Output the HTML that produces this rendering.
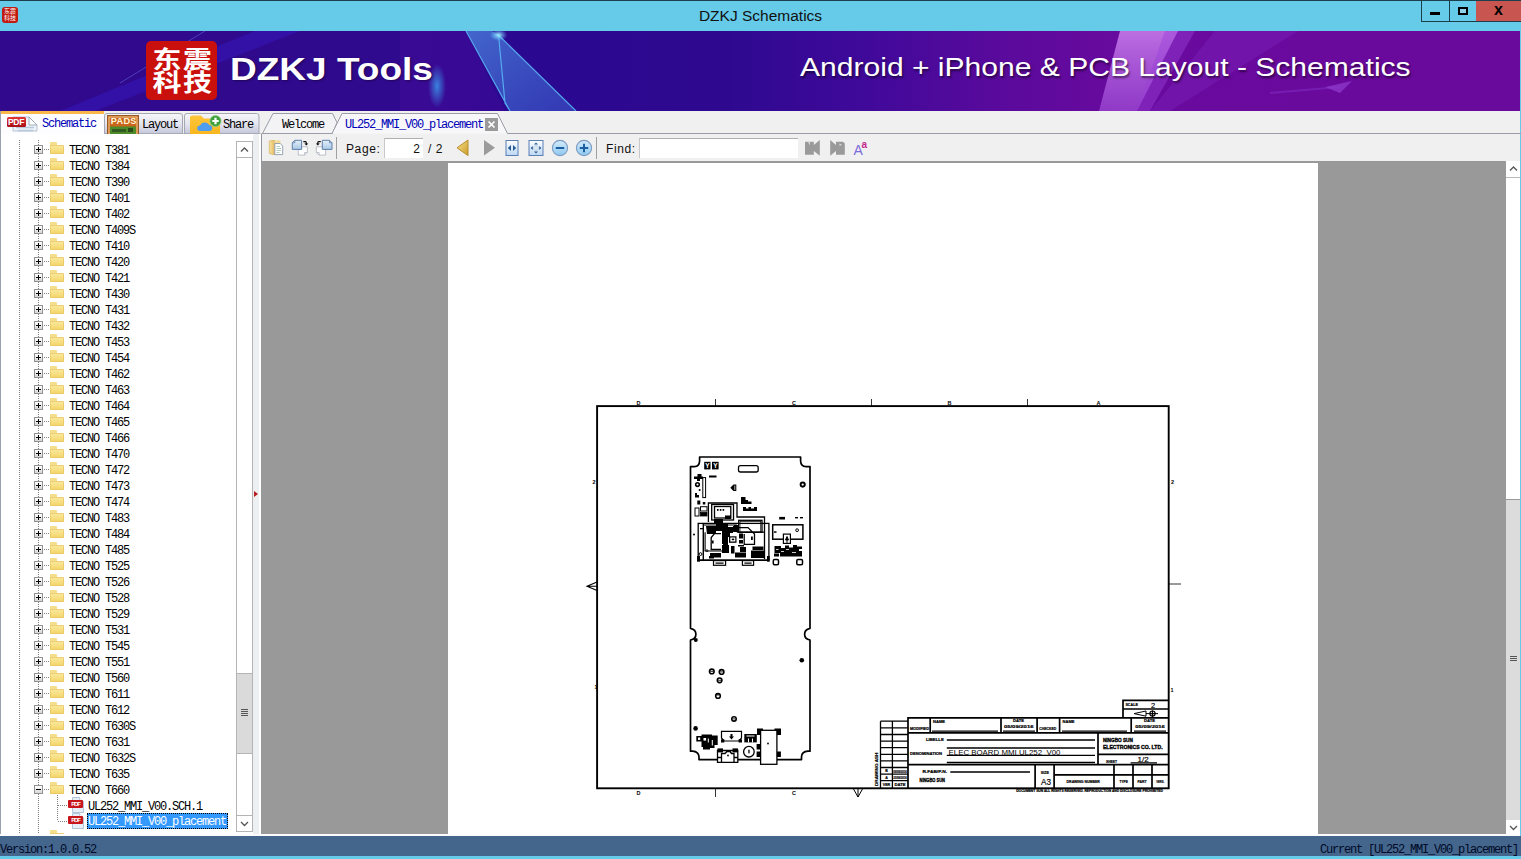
<!DOCTYPE html>
<html lang="en"><head><meta charset="utf-8"><title>DZKJ Schematics</title>
<style>
*{box-sizing:border-box;margin:0;padding:0}
html,body{width:1521px;height:859px;overflow:hidden;background:#6bc8e9}
body{font-family:"Liberation Sans",sans-serif;position:relative}
i{font-style:normal;display:block}
#win{position:absolute;left:0;top:0;width:1521px;height:859px;background:#6bc8e9;overflow:hidden}
#titlebar{position:absolute;left:0;top:0;width:1521px;height:31px;background:#6bc8e9;border-top:1px solid #1c3f4e}
#appicon{position:absolute;left:2px;top:6px;width:16px;height:16px;background:#c21a10;border-radius:3px;color:#fff;font:6px/7px "Liberation Sans","Noto Sans CJK SC",sans-serif;text-align:center;padding-top:1px;overflow:hidden}
#appicon span{display:block;letter-spacing:0}
#title{position:absolute;left:0;top:0;width:1521px;height:30px;text-align:center;font-size:15.5px;line-height:29px;color:#111}
#ctl{position:absolute;left:1421px;top:0;width:100px;height:21px;display:flex}
.cb{height:21px;border-left:1px solid #1d3c4a;border-bottom:1px solid #1d3c4a;position:relative}
.cb.min{width:28px}.cb.max{width:27px}.cb.cls{width:45px;background:#c7544f;color:#000;font:bold 15px/16px "Liberation Sans",sans-serif;text-align:center;border-bottom:none;border-left:none}
.cb.min i{position:absolute;left:8px;top:11px;width:10px;height:3px;background:#000}
.cb.max i{position:absolute;left:8px;top:6px;width:10px;height:9px;border:2px solid #000;background:#8fd2ea}
#banner{position:absolute;left:0;top:31px;width:1519px;height:80px;background:linear-gradient(90deg,#30098c 0%,#30098c 25%,#3a0a90 45%,#5a0c98 65%,#6a0a9c 80%,#6a0a9c 100%);overflow:hidden}
#bannerfx{position:absolute;left:0;top:0}
#logo{position:absolute;left:146px;top:10px;width:72px;height:60px;background:#c4140f;border-radius:6px;color:#fff;font:bold 29px/27px "Liberation Sans","Noto Sans CJK SC",sans-serif;text-align:center;padding-top:4px}
#logo span{display:block;white-space:nowrap}
#brand{position:absolute;left:231px;top:17px;font:bold 35px/40px "Liberation Sans",sans-serif;color:#fff;white-space:nowrap;text-shadow:1px 1px 2px rgba(0,0,0,.4)}
#slogan{position:absolute;left:800px;top:19px;font:28px/34px "Liberation Sans",sans-serif;color:#fff;white-space:nowrap;text-shadow:1px 2px 2px rgba(0,0,0,.55)}
#tabrow{position:absolute;left:0;top:111px;width:1521px;height:25px;background:#f0f0f0}
#tree{position:absolute;left:0;top:134px;width:259px;height:702px;background:#fff;overflow:hidden;border-left:2px solid #a9aeb8}
#tree .row{position:absolute;left:-2px;width:236px;height:16px;font:12px/16px "Liberation Mono",monospace;letter-spacing:-1.2px;color:#000;white-space:nowrap}
.vline{position:absolute;width:1px;background:repeating-linear-gradient(180deg,#808080 0 1px,transparent 1px 2px);margin-left:-2px}
.bx{position:absolute;left:34px;top:4px;width:9px;height:9px;border:1px solid #919191;background:linear-gradient(#fff,#d8d8d8)}
.bx:before{content:"";position:absolute;left:1px;top:3px;width:5px;height:1px;background:#000}
.bx.p:after{content:"";position:absolute;left:3px;top:1px;width:1px;height:5px;background:#000}
.hd{position:absolute;left:44px;top:8px;width:5px;height:1px;background:repeating-linear-gradient(90deg,#808080 0 1px,transparent 1px 2px)}
.hd2{position:absolute;left:58px;top:8px;width:9px;height:1px;background:repeating-linear-gradient(90deg,#808080 0 1px,transparent 1px 2px)}
.fo{position:absolute;left:50px;top:1px;width:14px;height:12px;background:linear-gradient(#f7e39a,#f3d267);border-radius:1px;border:1px solid #ecc95c}
.fo:before{content:"";position:absolute;left:-1px;top:-2px;width:7px;height:3px;background:#f1d57a;border-radius:1px 1px 0 0}
.tx{position:absolute;left:70px;top:0}
.tx.sel{background:#3399ff;color:#fff;outline:1px dotted #000;outline-offset:-1px;padding:0 2px 0 1px;height:16px;top:0}
.pdf{position:absolute;left:67px;top:1px;width:15px;height:9px;background:#c8151b;border-radius:1px}
.pdf b{display:block;font:bold 6px/9px "Liberation Sans",sans-serif;color:#fff;letter-spacing:0;text-align:center}
.pdf:after{content:"";position:absolute;left:5px;top:9px;width:11px;height:5px;background:#dfe9f5;border:1px solid #b9c8dc;border-top:none}
#tsb{position:absolute;left:234px;top:7px;width:17px;height:691px;border:1px solid #b4b4b4;background:#fff}
.sbu,.sbd{position:absolute;left:0;width:15px;height:16px;background:#fff}
.sbu{top:0;border-bottom:1px solid #b4b4b4}.sbd{bottom:0;border-top:1px solid #b4b4b4}
.thumb{position:absolute;left:0;top:531px;width:15px;height:81px;background:#dadada;border-top:1px solid #b4b4b4;border-bottom:1px solid #b4b4b4;padding-top:35px}
.thumb i,.thumb2 i{width:7px;height:1px;background:#555;margin:0 auto 1px auto}
#split{position:absolute;left:253px;top:134px;width:8px;height:702px;background:#f4f5f8}
#split i{position:absolute;left:1px;top:357px;width:0;height:0;border-left:4px solid #e82020;border-top:3.5px solid transparent;border-bottom:3.5px solid transparent}
#toolbar{position:absolute;left:261px;top:134px;width:1260px;height:27px;background:#f0f0f0;border-top:1px solid #8e949e;border-left:1px solid #8e949e}
#view{position:absolute;left:261px;top:161px;width:1260px;height:675px;background:#999;overflow:hidden}
#paper{position:absolute;left:187px;top:1px;width:870px;height:674px;background:#fff}
#vsb{position:absolute;left:1243px;top:0;width:17px;height:674px;background:#dcdcdc;border-left:1px solid #c8c8c8}
#vsb .sbu{border:none;height:17px;width:16px}#vsb .sbd{border:none;height:17px;width:16px}
.thumb2{position:absolute;left:0;top:17px;width:16px;height:315px;background:#fff;padding-top:475px}
#status{position:absolute;left:0;top:837px;width:1521px;height:19px;background:#43638c;color:#fff;font:12px/22px "Liberation Mono",monospace;letter-spacing:-1.2px}
#status .sl{position:absolute;left:0;top:0}
#status .sr{position:absolute;right:3px;top:0}
#toolbar{left:0;top:0;width:1521px;height:0;border:none;background:none;overflow:visible}
.tbg{position:absolute;left:261px;top:133px;width:1260px;height:28px;background:#f0f0f0;border-top:1px solid #8e949e;border-left:1px solid #8e949e;border-bottom:1px solid #a2a2a2}
.ic{position:absolute;display:block}
.sep{position:absolute;top:137px;width:1px;height:22px;background:#a0a0a0}
.lbl{position:absolute;top:140px;font:12.5px/16px "Liberation Sans",sans-serif;color:#111;white-space:nowrap}
.inp{position:absolute;top:138px;height:20px;background:#fff;border-top:1px solid #b0b0b0;border-left:1px solid #c8c8c8;text-align:right;font:12.5px/18px "Liberation Sans",sans-serif;color:#111}
.inp span{padding-right:4px}
.aa{position:absolute;font:14px/16px "Liberation Sans",sans-serif;color:#8a6fe0}
.aa2{position:absolute;font:11px/12px "Liberation Sans",sans-serif;color:#d02a8a}
#tabrow{left:0;top:0;width:1521px;height:0;overflow:visible;background:none}
.tabbg{position:absolute;left:0;top:111px;width:1521px;height:23px;background:#f0f0f0}
.tabsvg{position:absolute;left:0;top:111px;display:block}
.tt{position:absolute;font:11.5px/16px "Liberation Mono",monospace;letter-spacing:-.9px;color:#000;white-space:nowrap}
.tt.blue{color:#0000b8}
.pdft{position:absolute;font:bold 8.5px/10px "Liberation Sans",sans-serif;color:#fff;letter-spacing:-.3px}
.padst{position:absolute;font:bold 11.5px/12px "Liberation Sans",sans-serif;color:#fdf0b8;letter-spacing:-.4px}
#tree .row{font-size:11.5px;letter-spacing:-.9px}
#status{font-size:11.5px;letter-spacing:-.9px}
#logo{left:146px;top:10px;width:71px;height:59px;font:bold 27px/23px "Liberation Sans","Noto Sans CJK SC",sans-serif;padding-top:6px;background:#c9100c;border-radius:5px}
#logo span{transform:scaleY(.88);letter-spacing:1px}
#brand{left:232px;top:18px;font:bold 31px/40px "Liberation Sans",sans-serif;transform:scaleX(1.165);transform-origin:0 0}
#slogan{left:801px;top:19px;font:26px/34px "Liberation Sans",sans-serif;transform:scaleX(1.15);transform-origin:0 0}
#banner{width:1520px;height:80px}
.tabbg{width:1520px}
.tbg{width:1259px}
#view{width:1259px}
#vsb{left:1244px;width:15px;border-left:none;background:#dcdcdc}
#vsb .sbu,#vsb .sbd{width:15px;height:16px}
.thumb2{left:0;top:16px;width:15px;height:320px}
#tree{border-left:1px solid #9aa3ad}
#tree .row{left:-1px}
.vline{margin-left:-1px}
.tx{left:69px}
#status{top:836px;height:20px;background:#46648c;color:#000a28}
#status .sl,#status .sr{top:1px}
#tree .row{font-size:12px;letter-spacing:-1.2px}
.tt{font-size:12px;letter-spacing:-1.2px}
#status{font-size:12px;letter-spacing:-1.2px}
#status .sl,#status .sr{top:3px}
#tree .row{font-size:11.6px;letter-spacing:-.96px}
.tx{top:2px}
.tx.sel{top:0;line-height:20px}
.fo{left:50px;top:4px;width:14px;height:9px;background:linear-gradient(#faeaa0,#f2d568);border:none;border-radius:0 1px 1px 1px;box-shadow:inset 0 0 0 1px rgba(226,190,90,.6)}
.fo:before{left:0;top:-2px;width:7px;height:2px;background:#f5de8c;border-radius:1px 1px 0 0}
#tree .row{font-size:12px;letter-spacing:-1.2px}
.tx{top:1.5px}
.tx.sel{top:0;line-height:19px}
#brand{left:229.5px;top:19px;transform:scaleX(1.194)}
#slogan{left:800px;top:19px;transform:scaleX(1.156)}
.lbl{font-size:12px;letter-spacing:.9px;top:140.5px}
.inp{font-size:12px}
.lbl{letter-spacing:.6px}
.inp{line-height:20px}
.inp span{padding-right:3px}
.aa{font:14px/14px "Liberation Sans",sans-serif;color:#7d6ddc}
.aa2{font:bold 10px/10px "Liberation Sans",sans-serif;color:#c4288e}
.tbg{border-bottom:none;height:28px}
#view{height:673px}
#paper{left:187px;top:2px;width:870px;height:671px}
#vsb{height:673px}
#strip{position:absolute;left:0;top:834px;width:1520px;height:3px;background:#fbfcfe}
.aa2{margin-top:1.5px}
#vsb{left:1244.500px;width:14.500px;background:#fff}
#vsb .sbu{height:17px;border-bottom:1px solid #b8b8b8;width:15px}
#vsb .sbd{height:18px;border-top:1px solid #b8b8b8;width:15px}
.thumb2{top:338px;height:317px;background:#dcdcdc;border-top:1px solid #9a9a9a;padding-top:154px}
#logo{padding:0;text-align:left}
#logo span{position:absolute;left:6px;letter-spacing:3.4px;font-size:27px;line-height:27px;transform:scaleY(.88);transform-origin:0 0}
#logo .l1{top:6px}#logo .l2{top:29px}
#logo span{left:5.5px;letter-spacing:1.6px;font-size:29px;line-height:29px;transform:scaleY(.82)}
#logo .l1{top:7.5px}#logo .l2{top:30.5px}
#logo span{left:6.5px}
#logo .l1{top:7px}#logo .l2{top:30px}
#banner{background:linear-gradient(90deg,#30098c 0%,#300a8e 28%,#2a0890 34%,#2e0990 48%,#40099a 57%,#5a0a9c 66%,#690a9e 74%,#6a0a9c 100%)}
#split i{border-left-color:#b41a1a}
.padst{font-size:10.5px;top:116px !important;left:110px !important;letter-spacing:-.2px}
#tsb{left:235px}
.pdf{top:3px;left:68px;height:8px}
.pdf b{line-height:8px}
.pdf:after{top:-4px;left:5px;width:11px;height:15px;border:1px solid #b9c8dc;background:linear-gradient(#f4f8fd,#d5e2f2);z-index:-1}
.pdf{z-index:1}
.pdfi{position:absolute;left:67px;top:0;display:block}
html,body,#win,#titlebar{background-color:#66cae9}
#status{background:#44668c}
.tbg{top:134px;height:27px;border-top:none}
.padst{font-size:9.8px;top:116.5px !important;left:110.5px !important;letter-spacing:-.1px;color:#fff6d8}
.padst{font-size:9.2px;top:114.8px !important;left:110.8px !important;letter-spacing:.25px}
.cb.max i{height:8px}
.cb.cls{font:bold 16px/18px "Liberation Sans",sans-serif;border-bottom:1px solid #1d3c4a;background:#c8554f}
.thumb2{height:321px;padding-top:156px}
#vsb .sbd{height:14px;border-top:none}
#vsb .sbd svg{margin-top:-.5px}
.fo:before{top:-3px;height:3px}
#split{background:linear-gradient(90deg,#eeeff1 0,#eeeff1 6px,#fff 6px)}

</style></head>
<body>
<div id="win">
<div id="titlebar"><div id="appicon"><span>东震</span><span>科技</span></div><div id="title">DZKJ Schematics</div>
<div id="ctl"><div class="cb min"><i></i></div><div class="cb max"><i></i></div><div class="cb cls">x</div></div></div>
<div id="banner">
<svg id="bannerfx" width="1520" height="80" viewBox="0 0 1520 80"><defs>
<linearGradient id="bcry" x1="0" x2="1" y1="0" y2="1"><stop offset="0" stop-color="#4a86e0" stop-opacity=".75"/><stop offset="1" stop-color="#3a5fd0" stop-opacity=".55"/></linearGradient>
<radialGradient id="bglow"><stop offset="0" stop-color="#3aa0f0" stop-opacity=".8"/><stop offset="1" stop-color="#3aa0f0" stop-opacity="0"/></radialGradient>
<radialGradient id="bspark"><stop offset="0" stop-color="#9ff0ff" stop-opacity="1"/><stop offset="1" stop-color="#60c0ff" stop-opacity="0"/></radialGradient>
<linearGradient id="bpk" x1="0" x2="0" y1="0" y2="1"><stop offset="0" stop-color="#d890f8" stop-opacity=".75"/><stop offset="1" stop-color="#b060e8" stop-opacity=".55"/></linearGradient>
</defs>
<path d="M255 0 H300 L95 80 H60 Z" fill="#3a20d8" opacity=".35"/>
<path d="M205 0 L120 52" stroke="#6a70f0" stroke-width="1" opacity=".5"/>
<path d="M400 0 H466 L505 80 H400Z" fill="#4a0ca0" opacity=".35"/>
<path d="M466 0 H492 L498.500 4 L576 80 H510Z" fill="url(#bcry)"/>
<path d="M466 0 L510 80 M498.500 4 L505 72 L510 80 M498.500 4 L576 80" stroke="#58b4f4" stroke-width="1.200" fill="none" opacity=".9"/>
<ellipse cx="498.500" cy="4" rx="9" ry="6" fill="url(#bspark)"/>
<ellipse cx="437" cy="55" rx="9" ry="22" fill="url(#bglow)"/>
<path d="M1120 0 H1178 L1137 80 H1099Z" fill="url(#bpk)"/>
<path d="M1165 0 H1195 L1150 80 H1137Z" fill="#9a40d8" opacity=".45"/>
<path d="M1215 0 H1298 L1170 80 H1150Z" fill="#8a30c8" opacity=".28"/>
<path d="M1325 56 L1352 50 L1340 62Z" fill="#a050e0" opacity=".5"/>
<path d="M1270 62 L1340 56" stroke="#8a3ad0" stroke-width="2" opacity=".4"/>
</svg>
<div id="logo"><span class="l1">东震</span><span class="l2">科技</span></div>
<div id="brand">DZKJ Tools</div>
<div id="slogan">Android + iPhone &amp; PCB Layout - Schematics</div>
</div>
<div id="tabrow"><div class="tabbg"></div>
<svg class="tabsvg" width="1521" height="25" viewBox="0 111 1521 25">
<defs>
<linearGradient id="gtab" x1="0" x2="0" y1="0" y2="1"><stop offset="0" stop-color="#f6f6f9"/><stop offset=".5" stop-color="#e4e5ee"/><stop offset="1" stop-color="#c3c6da"/></linearGradient>
<linearGradient id="gpdf" x1="0" x2="0" y1="0" y2="1"><stop offset="0" stop-color="#e0363a"/><stop offset="1" stop-color="#a80c14"/></linearGradient>
<linearGradient id="gfold" x1="0" x2="0" y1="0" y2="1"><stop offset="0" stop-color="#fdc63a"/><stop offset="1" stop-color="#f9b61e"/></linearGradient>
</defs>
<!-- active left tab -->
<rect x="0" y="111" width="104" height="25" fill="#fdfdff"/>
<rect x="0" y="111" width="104" height="3" fill="#fbb84a"/>
<rect x="0" y="111" width="1" height="25" fill="#9aa3ad"/>
<!-- layout tab -->
<path d="M104.5 134 V116 Q104.5 113.5 107 113.5 H180 Q182.5 113.5 182.5 116 V134Z" fill="url(#gtab)" stroke="#a5a8b4" stroke-width="1"/>
<!-- share tab -->
<path d="M184.5 134 V116 Q184.5 113.5 187 113.5 H256.500 Q259 113.500 259 116 V134Z" fill="url(#gtab)" stroke="#a5a8b4" stroke-width="1"/>
<rect x="104" y="133.500" width="157" height="1" fill="#9a9da8"/>
<!-- doc tabs -->
<path d="M262.500 133.500 L273 113.500 H332.500 L337 122.500 L332.500 133.500Z" fill="#f3f3f5" stroke="#9a9da8" stroke-width="1"/>
<path d="M332 133.500 L342 113.500 H497.500 L507.500 133.500" fill="#f7f7f9" stroke="#9a9da8" stroke-width="1"/>
<path d="M507.500 133.500 H1521" stroke="#9a9da8" stroke-width="1"/>
<path d="M261.500 133.500 H332.5" stroke="#9a9da8" stroke-width="1"/>
<!-- PDF icon -->
<path d="M13 117 H29 L37 125 V131 H13Z" fill="#eef3fa" stroke="#b5c3d6" stroke-width="1"/>
<path d="M29 117 L37 125 H29Z" fill="#fff" stroke="#8d99aa" stroke-width=".8"/>
<path d="M16 127.500H34M18 130.500H33" stroke="#b8c8dc" stroke-width="1.600"/>
<rect x="7" y="117" width="19" height="10" rx="1.500" fill="url(#gpdf)"/>
<!-- PADS icon -->
<rect x="107.500" y="115.500" width="31" height="18.500" fill="#c9651c" stroke="#9a5a28" stroke-width="1"/>
<rect x="109" y="117" width="28" height="17" fill="none" stroke="#f3d9a0" stroke-width=".9"/>
<rect x="110" y="126.500" width="26" height="7.500" fill="#4c8a2a"/>
<rect x="112" y="129" width="14" height="3" fill="#335a20"/><rect x="128" y="128" width="5" height="4" fill="#2a4a1c"/>
<!-- share icon -->
<path d="M190 117.500 Q190 115.500 192 115.500 H201 L204 118.500 H218 Q220 118.500 220 120.500 V134 H190Z" fill="url(#gfold)"/>
<path transform="translate(1.200 -2)" d="M199 133 Q196 133 196 130 Q196 127.500 199 127.500 Q200 124.500 203.500 124.500 Q207 124.500 208 127 Q211 127 211 130 Q211 133 208 133Z" fill="#4f9df0"/>
<circle cx="215.500" cy="121" r="5.600" fill="#3fa03c" stroke="#8fce86" stroke-width=".8"/>
<path d="M212.300 121H218.700M215.500 117.800V124.200" stroke="#fff" stroke-width="2.200"/>
<!-- close box -->
<rect x="485" y="118" width="13" height="13" fill="#9a9a9a"/>
<path d="M488.500 121.500 L494.500 127.500 M494.500 121.500 L488.500 127.500" stroke="#fff" stroke-width="1.700"/>
</svg>
<span class="pdft" style="left:8px;top:117px">PDF</span>
<span class="padst" style="left:109px;top:115px">PADS</span>
<span class="tt blue" style="left:42px;top:116px">Schematic</span>
<span class="tt" style="left:142px;top:117px">Layout</span>
<span class="tt" style="left:223px;top:117px">Share</span>
<span class="tt" style="left:282px;top:117px">Welcome</span>
<span class="tt blue" style="left:345px;top:117px">UL252_MMI_V00_placement</span>

</div>
<div id="tree">
<div class="vline" style="left:19px;top:6px;height:694px"></div>
<div class="vline" style="left:38px;top:6px;height:694px"></div>
<div class="row" style="top:7px"><i class="bx p"></i><i class="hd"></i><i class="fo"></i><span class="tx">TECNO T381</span></div>
<div class="row" style="top:23px"><i class="bx p"></i><i class="hd"></i><i class="fo"></i><span class="tx">TECNO T384</span></div>
<div class="row" style="top:39px"><i class="bx p"></i><i class="hd"></i><i class="fo"></i><span class="tx">TECNO T390</span></div>
<div class="row" style="top:55px"><i class="bx p"></i><i class="hd"></i><i class="fo"></i><span class="tx">TECNO T401</span></div>
<div class="row" style="top:71px"><i class="bx p"></i><i class="hd"></i><i class="fo"></i><span class="tx">TECNO T402</span></div>
<div class="row" style="top:87px"><i class="bx p"></i><i class="hd"></i><i class="fo"></i><span class="tx">TECNO T409S</span></div>
<div class="row" style="top:103px"><i class="bx p"></i><i class="hd"></i><i class="fo"></i><span class="tx">TECNO T410</span></div>
<div class="row" style="top:119px"><i class="bx p"></i><i class="hd"></i><i class="fo"></i><span class="tx">TECNO T420</span></div>
<div class="row" style="top:135px"><i class="bx p"></i><i class="hd"></i><i class="fo"></i><span class="tx">TECNO T421</span></div>
<div class="row" style="top:151px"><i class="bx p"></i><i class="hd"></i><i class="fo"></i><span class="tx">TECNO T430</span></div>
<div class="row" style="top:167px"><i class="bx p"></i><i class="hd"></i><i class="fo"></i><span class="tx">TECNO T431</span></div>
<div class="row" style="top:183px"><i class="bx p"></i><i class="hd"></i><i class="fo"></i><span class="tx">TECNO T432</span></div>
<div class="row" style="top:199px"><i class="bx p"></i><i class="hd"></i><i class="fo"></i><span class="tx">TECNO T453</span></div>
<div class="row" style="top:215px"><i class="bx p"></i><i class="hd"></i><i class="fo"></i><span class="tx">TECNO T454</span></div>
<div class="row" style="top:231px"><i class="bx p"></i><i class="hd"></i><i class="fo"></i><span class="tx">TECNO T462</span></div>
<div class="row" style="top:247px"><i class="bx p"></i><i class="hd"></i><i class="fo"></i><span class="tx">TECNO T463</span></div>
<div class="row" style="top:263px"><i class="bx p"></i><i class="hd"></i><i class="fo"></i><span class="tx">TECNO T464</span></div>
<div class="row" style="top:279px"><i class="bx p"></i><i class="hd"></i><i class="fo"></i><span class="tx">TECNO T465</span></div>
<div class="row" style="top:295px"><i class="bx p"></i><i class="hd"></i><i class="fo"></i><span class="tx">TECNO T466</span></div>
<div class="row" style="top:311px"><i class="bx p"></i><i class="hd"></i><i class="fo"></i><span class="tx">TECNO T470</span></div>
<div class="row" style="top:327px"><i class="bx p"></i><i class="hd"></i><i class="fo"></i><span class="tx">TECNO T472</span></div>
<div class="row" style="top:343px"><i class="bx p"></i><i class="hd"></i><i class="fo"></i><span class="tx">TECNO T473</span></div>
<div class="row" style="top:359px"><i class="bx p"></i><i class="hd"></i><i class="fo"></i><span class="tx">TECNO T474</span></div>
<div class="row" style="top:375px"><i class="bx p"></i><i class="hd"></i><i class="fo"></i><span class="tx">TECNO T483</span></div>
<div class="row" style="top:391px"><i class="bx p"></i><i class="hd"></i><i class="fo"></i><span class="tx">TECNO T484</span></div>
<div class="row" style="top:407px"><i class="bx p"></i><i class="hd"></i><i class="fo"></i><span class="tx">TECNO T485</span></div>
<div class="row" style="top:423px"><i class="bx p"></i><i class="hd"></i><i class="fo"></i><span class="tx">TECNO T525</span></div>
<div class="row" style="top:439px"><i class="bx p"></i><i class="hd"></i><i class="fo"></i><span class="tx">TECNO T526</span></div>
<div class="row" style="top:455px"><i class="bx p"></i><i class="hd"></i><i class="fo"></i><span class="tx">TECNO T528</span></div>
<div class="row" style="top:471px"><i class="bx p"></i><i class="hd"></i><i class="fo"></i><span class="tx">TECNO T529</span></div>
<div class="row" style="top:487px"><i class="bx p"></i><i class="hd"></i><i class="fo"></i><span class="tx">TECNO T531</span></div>
<div class="row" style="top:503px"><i class="bx p"></i><i class="hd"></i><i class="fo"></i><span class="tx">TECNO T545</span></div>
<div class="row" style="top:519px"><i class="bx p"></i><i class="hd"></i><i class="fo"></i><span class="tx">TECNO T551</span></div>
<div class="row" style="top:535px"><i class="bx p"></i><i class="hd"></i><i class="fo"></i><span class="tx">TECNO T560</span></div>
<div class="row" style="top:551px"><i class="bx p"></i><i class="hd"></i><i class="fo"></i><span class="tx">TECNO T611</span></div>
<div class="row" style="top:567px"><i class="bx p"></i><i class="hd"></i><i class="fo"></i><span class="tx">TECNO T612</span></div>
<div class="row" style="top:583px"><i class="bx p"></i><i class="hd"></i><i class="fo"></i><span class="tx">TECNO T630S</span></div>
<div class="row" style="top:599px"><i class="bx p"></i><i class="hd"></i><i class="fo"></i><span class="tx">TECNO T631</span></div>
<div class="row" style="top:615px"><i class="bx p"></i><i class="hd"></i><i class="fo"></i><span class="tx">TECNO T632S</span></div>
<div class="row" style="top:631px"><i class="bx p"></i><i class="hd"></i><i class="fo"></i><span class="tx">TECNO T635</span></div>
<div class="row" style="top:647px"><i class="bx m"></i><i class="hd"></i><i class="fo"></i><span class="tx">TECNO T660</span></div>
<div class="vline" style="left:57px;top:661px;height:26px"></div>
<div class="row" style="top:663px"><i class="hd2"></i><svg class="pdfi" width="18" height="16" viewBox="0 0 18 16"><path d="M5.500 .5H12.500L16.500 4.500V15.500H5.500Z" fill="#e6eef8" stroke="#b4c4d8" stroke-width="1"/><path d="M12.500 .5V4.500H16.500" fill="#fff" stroke="#b4c4d8" stroke-width=".8"/><rect x="1" y="3" width="15" height="8" rx="1" fill="#c8151b"/><text x="8.500" y="9.300" font-family="Liberation Sans,sans-serif" font-size="6" font-weight="bold" fill="#fff" text-anchor="middle">PDF</text></svg><span class="tx" style="left:88px">UL252_MMI_V00.SCH.1</span></div>
<div class="row" style="top:679px"><i class="hd2"></i><svg class="pdfi" width="18" height="16" viewBox="0 0 18 16"><path d="M5.500 .5H12.500L16.500 4.500V15.500H5.500Z" fill="#e6eef8" stroke="#b4c4d8" stroke-width="1"/><path d="M12.500 .5V4.500H16.500" fill="#fff" stroke="#b4c4d8" stroke-width=".8"/><rect x="1" y="3" width="15" height="8" rx="1" fill="#c8151b"/><text x="8.500" y="9.300" font-family="Liberation Sans,sans-serif" font-size="6" font-weight="bold" fill="#fff" text-anchor="middle">PDF</text></svg><span class="tx sel" style="left:87px">UL252_MMI_V00_placement</span></div>
<div class="row" style="top:695px"><i class="fo"></i></div>
<div id="tsb"><div class="sbu"><svg width="15" height="15" viewBox="0 0 15 15"><path d="M4 9.5 L7.5 6 L11 9.5" fill="none" stroke="#555" stroke-width="1.3"/></svg></div><div class="thumb"><i></i><i></i><i></i><i></i></div><div class="sbd"><svg width="15" height="15" viewBox="0 0 15 15"><path d="M4 6 L7.5 9.5 L11 6" fill="none" stroke="#555" stroke-width="1.3"/></svg></div></div>
</div>
<div id="split"><i></i></div>
<div id="toolbar">
<div class="tbg"></div>
<svg class="ic" style="left:267px;top:138px" width="68" height="20" viewBox="267 138 68 20"><defs><linearGradient id="gfo" x1="0" x2="1"><stop offset="0" stop-color="#f9e6a4"/><stop offset="1" stop-color="#e2b95c"/></linearGradient><linearGradient id="gbp" x1="0" x2="0" y1="0" y2="1"><stop offset="0" stop-color="#e4f0fb"/><stop offset="1" stop-color="#a9c8e6"/></linearGradient></defs>
<path d="M269.300 141L274.500 140.300V154.800L269.300 153.500Z" fill="url(#gfo)" stroke="#cfa54c" stroke-width=".6"/><path d="M274.500 140.300H280.500V143.500H274.500Z" fill="#f2dc98"/>
<path d="M274.800 143.500H280.300L282.700 146V154.600H274.800Z" fill="#fdfefe" stroke="#8f9bab" stroke-width=".9"/><path d="M276.500 146.500H280M276.500 148.500H281M276.500 150.500H281M276.500 152.500H279.500" stroke="#9fc2a8" stroke-width=".8"/>
<path d="M298.300 146.800H307.400V152.500L304.500 155.100H298.300Z" fill="#fff" stroke="#b4b9c2" stroke-width=".9"/><path d="M304.500 155V152.500H307.300" fill="none" stroke="#b4b9c2" stroke-width=".8"/>
<path d="M292.300 142.800L294.800 140.300H301.600V149.400H292.300Z" fill="url(#gbp)" stroke="#5e7fa8" stroke-width="1"/><path d="M292.500 142.800H294.800V140.500" fill="none" stroke="#5e7fa8" stroke-width=".8"/>
<path d="M303.300 141.600H305.500Q306.300 141.600 306.300 143V144" fill="none" stroke="#111" stroke-width="1.300"/><path d="M304.300 143.600H308.300L306.300 145.600Z" fill="#111"/>
<path d="M316.300 146.800H325.600V155.100H319.200L316.300 152.500Z" fill="#fff" stroke="#b4b9c2" stroke-width=".9"/><path d="M319.200 155V152.500H316.400" fill="none" stroke="#b4b9c2" stroke-width=".8"/>
<path d="M322.300 140.300H329.500L332 142.800V149.400H322.300Z" fill="url(#gbp)" stroke="#5e7fa8" stroke-width="1"/><path d="M329.500 140.500V142.800H331.800" fill="none" stroke="#5e7fa8" stroke-width=".8"/>
<path d="M320.800 141.600H318.600Q317.800 141.600 317.800 143V144" fill="none" stroke="#111" stroke-width="1.300"/><path d="M315.800 143.600H319.800L317.800 145.600Z" fill="#111"/>
</svg>
<i class="sep" style="left:336px"></i>
<span class="lbl" style="left:346px">Page:</span>
<div class="inp" style="left:384px;width:39px"><span>2</span></div>
<span class="lbl" style="left:428px">/ 2</span>
<svg class="ic" style="left:456px;top:139px" width="13" height="18" viewBox="0 0 13 18"><defs><linearGradient id="gpa" x1="0" x2="1" y1="0" y2="1"><stop offset="0" stop-color="#fbe48a"/><stop offset="1" stop-color="#c99a2c"/></linearGradient></defs><path d="M1 8.8 L12 1 V16.6 Z" fill="url(#gpa)" stroke="#b98f2a" stroke-width="1"/></svg>
<svg class="ic" style="left:483px;top:139px" width="13" height="18" viewBox="0 0 13 18"><path d="M1 1 L12 8.8 L1 16.6 Z" fill="#9b9b9b"/></svg>
<svg class="ic" style="left:505px;top:139px" width="14" height="18" viewBox="0 0 14 18"><defs><linearGradient id="gfw" x1="0" x2="0" y1="0" y2="1"><stop offset="0" stop-color="#fdfeff"/><stop offset="1" stop-color="#bcd8f4"/></linearGradient></defs><rect x="1" y="1.5" width="12" height="15" fill="url(#gfw)" stroke="#5b7fb4" stroke-width="1"/><path d="M2.8 9 L6 6 V12Z M11.2 9 L8 6 V12Z" fill="#2b5c93"/></svg>
<svg class="ic" style="left:528px;top:139px" width="16" height="18" viewBox="0 0 16 18"><rect x="1" y="1.5" width="14" height="15" fill="url(#gfw)" stroke="#5b7fb4" stroke-width="1"/><circle cx="8" cy="9" r="2.4" fill="#dce8f4" stroke="#b3c4d8" stroke-width=".6"/><path d="M2.6 9 L4.8 7 V11Z M13.4 9 L11.2 7 V11Z M8 3.6 L10 5.6 H6Z M8 14.4 L10 12.4 H6Z" fill="#2b5c93"/></svg>
<svg class="ic" style="left:551px;top:139px" width="18" height="18" viewBox="0 0 18 18"><defs><linearGradient id="gzm" x1="0" x2="0" y1="0" y2="1"><stop offset="0" stop-color="#d4ebfb"/><stop offset="1" stop-color="#8ec8f2"/></linearGradient></defs><circle cx="9" cy="9" r="7.6" fill="url(#gzm)" stroke="#7d9cc0" stroke-width="1.1"/><path d="M4.8 9 H13.2" stroke="#1b5fa0" stroke-width="2"/></svg>
<svg class="ic" style="left:575px;top:139px" width="18" height="18" viewBox="0 0 18 18"><circle cx="9" cy="9" r="7.6" fill="url(#gzm)" stroke="#7d9cc0" stroke-width="1.1"/><path d="M4.8 9 H13.2 M9 4.8 V13.2" stroke="#1b5fa0" stroke-width="2"/></svg>
<i class="sep" style="left:596px"></i>
<span class="lbl" style="left:606px">Find:</span>
<div class="inp" style="left:639px;width:159px"></div>
<svg class="ic" style="left:804px;top:139px" width="18" height="18" viewBox="804 139 18 18"><path d="M805 141.800H813.800V145L819.800 140V155.700L813.800 151V154.700H805Z" fill="#9a9a9a"/><path d="M808.300 142L809.300 145.500L810.300 142Z" fill="#d8d8d8"/></svg>
<svg class="ic" style="left:829px;top:139px" width="18" height="18" viewBox="829 139 18 18"><path d="M830.200 140L836 145V141.800H843L844.800 143.500V154.700H836V151L830.200 155.700Z" fill="#9a9a9a"/><path d="M839.500 143.500L842 144.800L839.500 146Z" fill="#d8d8d8"/></svg>
<span class="aa" style="left:853.5px;top:142.500px">A</span><span class="aa2" style="left:861.5px;top:138px">a</span>

</div>
<div id="view">
<div id="paper"></div>
<svg id="dwg" width="1260" height="675" viewBox="261 161 1260 675" style="position:absolute;left:0;top:0" font-family="Liberation Sans,sans-serif" fill="none" stroke="#000">
<!-- sheet frame -->
<rect x="597.100" y="406.100" width="571.600" height="382.200" stroke-width="1.900"/>
<path d="M715.500 399V406M871.500 399V406M1027.500 399V406M715.500 789V797M1169 584H1181" stroke-width=".8"/>
<path d="M597 582L587 586.200L597 590.500M587 586.200H597" stroke-width="1.100"/>
<path d="M853.500 789L858 797L862.500 789M858 797V789" stroke-width="1"/>
<g font-size="5.500" font-weight="bold" fill="#000" stroke="none" text-anchor="middle">
<text x="638.500" y="405">D</text><text x="794" y="405">C</text><text x="949.500" y="405">B</text><text x="1098.500" y="405">A</text>
<text x="638.500" y="794.500">D</text><text x="794" y="794.500">C</text>
<text x="594" y="484">2</text><text x="1172.500" y="484">2</text><text x="596" y="689">1</text><text x="1172" y="692">1</text>
</g>
<!-- PCB outline -->
<path d="M776.900 759.600H801.500V757Q801.500 751.600 808 751.200H810V640Q804.600 639 804.600 634.200Q804.600 629.500 810 628.400V466.700H806Q800.800 466.300 800.600 461V457H699.600V461Q699.400 466.300 694.500 466.700H690.500V628.400Q695.900 629.500 695.900 634.200Q695.900 639 690.500 640V751.200H692.500Q698.800 751.600 699 757V759.600H717.300M737.900 759.600H760.600" stroke-width="1.700" stroke-linejoin="round"/>
<!-- top area -->
<rect x="738.500" y="465.700" width="19.700" height="6.300" rx="2" stroke-width="1.300"/>
<g fill="#000" stroke="none">
<rect x="704.200" y="461.800" width="6.300" height="7.600"/><rect x="712" y="461.800" width="6.600" height="7.600"/>
<path d="M694 476.500H697.500V474H701.500V476.500H703V479H700V481H697V479H694Z"/>
<rect x="709" y="475.500" width="7.500" height="2"/>
<circle cx="699.600" cy="490" r="1"/>
<path d="M695 493H697V495H699V497.500H695Z"/>
<rect x="697.300" y="500.500" width="3" height="4"/><rect x="702.800" y="502" width="2.500" height="2.500"/>
<path d="M730.300 487.800L733.500 484.600H736.300V491H733.500Z"/>
<path d="M741 497H745.500V500H748V501.500H751.500V504H741Z"/>
<path d="M743 507H746V508.500H748.500V507H751V508.500H754V507H757V511H743Z"/>
<rect x="779.200" y="516.900" width="5.800" height="2.600"/><rect x="795" y="517" width="3" height="1.400"/><rect x="800" y="517" width="3" height="1.400"/>
<circle cx="694" cy="534.600" r="1"/>
<circle cx="695.800" cy="640" r="2"/><circle cx="801.800" cy="660.300" r="2.300"/><circle cx="695.600" cy="728.400" r="2.300"/>
</g>
<g fill="#fff" stroke="none" font-size="6.500" font-weight="bold" text-anchor="middle"><text x="707.300" y="468">Y</text><text x="715.300" y="468">Y</text></g>
<path d="M734.800 485.500V490" stroke="#fff" stroke-width=".7"/>
<circle cx="697.500" cy="484.600" r="1.800" stroke-width="1.600"/>
<circle cx="802.700" cy="484.600" r="2.100" stroke-width="1.900"/>
<rect x="702.800" y="477.600" width="2.800" height="20" stroke-width="1"/>
<rect x="695" y="508" width="4" height="8" stroke-width="1"/><rect x="700.500" y="506.700" width="6.500" height="4.300" stroke-width="1"/><rect x="700.500" y="512.500" width="6.500" height="3.500" fill="#000" stroke-width=".8"/>
<!-- shield and modules -->
<path d="M708.400 522V503H737V517H764.500V559" stroke-width="1.300"/>
<rect x="711.700" y="504.500" width="21.800" height="15.500" stroke-width="1.300"/><rect x="714.500" y="506.500" width="16.300" height="11.500" stroke-width="1.300"/>
<g fill="#000" stroke="none"><rect x="717" y="509" width="1.600" height="1.800"/><rect x="719.800" y="509" width="1.600" height="1.800"/><rect x="722.600" y="509" width="1.600" height="1.800"/><rect x="725" y="515.500" width="6" height="3.500"/>
<rect x="714" y="519" width="9" height="5"/><rect x="716" y="523" width="6" height="4"/></g>
<rect x="698.200" y="523.400" width="70.700" height="36.800" stroke-width="1.300"/>
<path d="M703.300 523.400V560M698.200 560.300H769" stroke-width="1.400"/>
<path d="M703.300 525H736.800" stroke-width="1"/>
<rect x="738.700" y="520.300" width="23.300" height="12" stroke-width="1.300"/><rect x="740" y="521.600" width="20.700" height="10.600" stroke-width=".7"/>
<path d="M736.800 527.600H748L754.500 534.100V544.400H744.200V534M736.800 532.200H764.500" stroke-width="1.300"/>
<g fill="#000" stroke="none">
<rect x="697" y="556" width="3" height="5.700"/><rect x="767" y="556" width="2.700" height="5.700"/>
<rect x="700" y="528" width="3" height="1.300"/>
<path d="M706 526H722V523.500H728V527H734V525H738V531H733V533H726V531H716V534H707Z"/>
<rect x="733" y="526" width="6" height="6"/>
<rect x="722" y="531" width="8" height="6"/><rect x="722" y="536" width="6" height="8"/><rect x="723" y="543" width="5" height="9"/>
<rect x="729" y="536.300" width="7.500" height="6.500"/>
<rect x="739" y="533.500" width="4" height="5"/><rect x="739" y="540" width="4" height="3.500"/><rect x="738" y="545" width="6" height="1.500"/>
<rect x="751" y="536.500" width="1.800" height="3.500"/>
<rect x="710" y="553" width="11" height="4.500"/><rect x="709" y="556" width="5" height="2.500"/>
<rect x="722" y="545" width="7" height="8"/><rect x="731" y="546" width="3.500" height="7.500"/><rect x="735" y="552.500" width="11" height="5"/><rect x="740" y="547" width="6" height="5"/>
<rect x="752.500" y="546.500" width="11" height="3.500"/><rect x="751" y="550.500" width="13" height="7.500"/>
<rect x="712" y="540.500" width="1.600" height="3"/>
</g>
<rect x="730.300" y="537.500" width="5" height="4" fill="#fff" stroke="none"/><rect x="731.800" y="538.600" width="2.400" height="1.600" fill="#000" stroke="none"/>
<path d="M705.100 532.300V551H722" stroke-width="1.100"/>
<path d="M721 533.600H714.500L711.200 537.500V549.500H721" stroke-width="1.300"/>
<circle cx="700.500" cy="554.100" r="1.400" stroke-width="1"/><circle cx="707" cy="550.700" r="1" stroke-width=".8"/>
<rect x="713.500" y="560.600" width="12.100" height="4.700" stroke-width="1.200"/><rect x="742.400" y="560.600" width="11.200" height="4.700" stroke-width="1.200"/>
<path d="M715.500 563.200H723.600M744.400 563.200H751.600" stroke-width="1.200"/>
<!-- right module -->
<rect x="772.700" y="524.800" width="30.200" height="14.400" stroke-width="1.500"/>
<circle cx="797.100" cy="530.200" r="1.400" stroke-width="1"/>
<rect x="774" y="531.300" width="2.500" height="1.500" fill="#000" stroke="none"/>
<rect x="783.400" y="534.100" width="7" height="9.300" stroke-width="1.200" fill="#fff"/>
<path d="M787 536.500L785.500 540H788.500ZM787 540V543.400" stroke-width="1" fill="#000"/>
<g fill="#000" stroke="none">
<path d="M774.500 546H781V548H785V545.500H789V547.500H793V545H797V546.500H802V549H799V551H802V556.500H780V553H774.500Z"/>
<rect x="774" y="553.500" width="5" height="3"/>
</g>
<path d="M781 551.500H784M786 549.500H789M792 552.500H796M776 549.500H778.500" stroke="#fff" stroke-width=".8"/>
<rect x="773.300" y="559.600" width="5.200" height="5.200" rx="1.200" stroke-width="1.500"/><rect x="796.800" y="559.600" width="5.700" height="5.200" rx="1.200" stroke-width="1.500"/>
<!-- test points -->
<g stroke-width="1.600"><circle cx="711.800" cy="671.400" r="2.300"/><circle cx="721.600" cy="671.900" r="2.300"/><circle cx="719.600" cy="680.300" r="2.300"/><circle cx="718" cy="695.900" r="2.300"/><circle cx="734" cy="718.900" r="2.200"/></g>
<g stroke-width=".8"><path d="M710.300 671.400H713.300M720.100 671.900H723.100M718.100 680.300H721.100M716.800 695H719.200M732.800 718.900H735.200"/></g>
<!-- bottom components -->
<g fill="#000" stroke="none">
<path d="M696.300 736H701.500V734.500H712V735.500H717.700V745H714.500V748H710V749.500H703V747H701.500V741.500H696.300Z"/>
<rect x="744.300" y="734" width="12.500" height="8.400"/>
<rect x="721" y="739.300" width="3.300" height="3.200"/><rect x="738.600" y="739.300" width="3.400" height="3.200"/>
<rect x="757" y="728.500" width="6" height="6.500"/><rect x="774.500" y="728.500" width="6.500" height="6.500"/><rect x="756.600" y="744" width="4" height="5.500"/><rect x="756.600" y="751.500" width="4" height="5.500"/><rect x="776.900" y="751.500" width="4" height="5.500"/>
<rect x="717.500" y="748.400" width="5.500" height="4"/><rect x="732.500" y="748.400" width="5.500" height="4"/>
<circle cx="768" cy="743.500" r="1"/><circle cx="728" cy="755.500" r=".9"/>
<path d="M730.500 734H732.500V736.500H734L731.500 739.500L729 736.500H730.500Z"/>
<rect x="748.300" y="749.700" width="1.300" height="3.600"/>
</g>
<g fill="#fff" stroke="none"><rect x="698" y="737.500" width="2.200" height="2.400"/><rect x="703.500" y="738" width="2.600" height="2.600"/><rect x="707.800" y="738.500" width="1" height="4"/><rect x="711.800" y="740" width="1" height="5.500"/><rect x="748" y="738.500" width="1" height="3.900"/><rect x="752" y="738.500" width="1" height="3.900"/><rect x="746.500" y="735.500" width="8" height="1"/></g>
<path d="M721.500 731.300H741.500V738L739 741H724L721.500 738Z" stroke-width="1.200"/>
<rect x="760.600" y="730.300" width="16.300" height="34" stroke-width="1.300" fill="#fff"/>
<circle cx="768" cy="743.500" r=".9" fill="#000" stroke="none"/>
<circle cx="748.900" cy="751.700" r="5.300" stroke-width="1.300"/>
<path d="M717.500 762.400V750.500H737.800V762.400ZM717.500 757.500H721.500V753.500H725L727 751.500H730L731.500 753.500H734V757.500H737.800M721.500 757.500V762M734 757.500V762" stroke-width="1.300"/>
<!-- title block -->
<g stroke-width="1.700"><path d="M908 788V717.800H1168.500M908 732.800H1168.500M908 764.700H1168.500M1098 732.800V764.700M1098 754.400H1168.500M1123 717.800V700.300H1168.500M1123 709H1168.500M930.200 717.800V732.800M1001 717.800V732.800M1037.100 717.800V732.800M1059.600 717.800V732.800M1131.200 717.800V732.800M1035.100 764.700V788M1054.100 764.700V788M1114 764.700V788M1133 764.700V788M1152 764.700V788M1054.100 774.800H1168.500"/></g>
<g stroke-width="1.300"><path d="M880.500 721.200V788M892.400 721.200V788M880.500 721.200H908M880.500 727.900H908M880.500 734.500H908M880.500 741.100H908M880.500 747.700H908M880.500 754.300H908M880.500 760.900H908M880.500 767.500H908M880.500 774.100H908M880.500 780.700H908"/>
<path d="M946.800 740H1095M946.800 748H1095M946.800 755.400H1095M946.800 762.500H1095M950.300 772H1030M932 731.200H998M1003 731.200H1035M1062 731.200H1127M1134 731.200H1166M1130.600 762.800H1157"/></g>
<g fill="#000" stroke="#000" stroke-width=".18" font-weight="bold">
<g font-size="3.600">
<text x="910" y="730" textLength="19" lengthAdjust="spacingAndGlyphs">MODIFIED</text><text x="933" y="722.500" textLength="12" lengthAdjust="spacingAndGlyphs">NAME</text><text x="1018.500" y="722.300" text-anchor="middle" textLength="11" lengthAdjust="spacingAndGlyphs">DATE</text><text x="1039.200" y="730" textLength="17" lengthAdjust="spacingAndGlyphs">CHECKED</text><text x="1062.500" y="722.500" textLength="12" lengthAdjust="spacingAndGlyphs">NAME</text><text x="1149.500" y="722.300" text-anchor="middle" textLength="11" lengthAdjust="spacingAndGlyphs">DATE</text>
<text x="925.900" y="740.600" textLength="18" lengthAdjust="spacingAndGlyphs">LIBELLE</text><text x="910" y="755.300" textLength="32" lengthAdjust="spacingAndGlyphs">DENOMINATION</text><text x="922.400" y="772.600" textLength="24.6" lengthAdjust="spacingAndGlyphs">R.FAB/P.N.</text>
<text x="1125.400" y="706.200" textLength="12.6" lengthAdjust="spacingAndGlyphs">SCALE</text><text x="1106" y="762.700" textLength="11" lengthAdjust="spacingAndGlyphs">SHEET</text><text x="1040.700" y="773.700" textLength="8.3" lengthAdjust="spacingAndGlyphs">SIZE</text>
<text x="1083.200" y="782.800" text-anchor="middle" textLength="33.2" lengthAdjust="spacingAndGlyphs">DRAWING NUMBER</text><text x="1123.700" y="782.800" text-anchor="middle" textLength="8.5" lengthAdjust="spacingAndGlyphs">TYPE</text><text x="1142" y="782.800" text-anchor="middle" textLength="9" lengthAdjust="spacingAndGlyphs">PART</text><text x="1160.300" y="782.800" text-anchor="middle" textLength="8" lengthAdjust="spacingAndGlyphs">VERS.</text>
<text x="886.500" y="772.300" text-anchor="middle">B</text><text x="886.500" y="778.900" text-anchor="middle">A</text><text x="886.500" y="786" text-anchor="middle" textLength="7.5" lengthAdjust="spacingAndGlyphs">VER</text><text x="900" y="786" text-anchor="middle" textLength="11" lengthAdjust="spacingAndGlyphs">DATE</text>
<text x="900" y="772.500" text-anchor="middle" textLength="13.5" lengthAdjust="spacingAndGlyphs">09/09/2016</text><text x="900" y="779" text-anchor="middle" textLength="13.5" lengthAdjust="spacingAndGlyphs">23/08/2016</text>
<text x="1089.500" y="791.900" text-anchor="middle" font-size="3.100" textLength="146.6" lengthAdjust="spacingAndGlyphs">DOCUMENT SUN ALL RIGHTS RESERVED. REPRODUCTION AND DISCLOSURE PROHIBITED</text>
<text transform="translate(878.300 786) rotate(-90)" textLength="33.5" lengthAdjust="spacingAndGlyphs">DRAWING ASH</text>
</g>
<g font-size="4.300"><text x="1003.900" y="728" textLength="29.6" lengthAdjust="spacingAndGlyphs">05/09/2016</text><text x="1135.300" y="728" textLength="29.6" lengthAdjust="spacingAndGlyphs">05/09/2016</text></g>
<g font-size="5.300" stroke-width=".35"><text x="919.500" y="782" textLength="25.500" lengthAdjust="spacingAndGlyphs">NINGBO SUN</text><text x="1102.900" y="742.300" textLength="30" lengthAdjust="spacingAndGlyphs">NINGBO SUN</text><text x="1102.900" y="748.700" textLength="59.700" lengthAdjust="spacingAndGlyphs">ELECTRONICS CO. LTD.</text></g>
<g font-weight="normal"><text x="948.500" y="754.800" font-size="7.600" textLength="112" lengthAdjust="spacingAndGlyphs" xml:space="preserve" stroke="none">ELEC BOARD MMI UL252  V00</text><text x="1151" y="707.800" font-size="7.500">2</text><text x="1137.600" y="762.300" font-size="8">1/2</text><text x="1041" y="785.300" font-size="9.500" textLength="10" lengthAdjust="spacingAndGlyphs">A3</text></g>
</g>
<path d="M1134 713.600L1146 711V716.200ZM1146 713.600H1158M1152.500 710.500V716.700" stroke-width="1"/><circle cx="1152.500" cy="713.600" r="2.600" stroke-width="1.200"/><circle cx="1152.500" cy="713.600" r="1.200" fill="#000" stroke="none"/>
</svg>

<div id="vsb"><div class="sbu"><svg width="15" height="15" viewBox="0 0 15 15"><path d="M4 9.5 L7.5 6 L11 9.5" fill="none" stroke="#555" stroke-width="1.3"/></svg></div><div class="thumb2"><i></i><i></i><i></i></div><div class="sbd"><svg width="15" height="15" viewBox="0 0 15 15"><path d="M4 6 L7.5 9.5 L11 6" fill="none" stroke="#555" stroke-width="1.3"/></svg></div></div>
</div>
<div id="strip"></div>
<div id="status"><span class="sl">Version:1.0.0.52</span><span class="sr">Current [UL252_MMI_V00_placement]</span></div>
</div>
</body></html>
